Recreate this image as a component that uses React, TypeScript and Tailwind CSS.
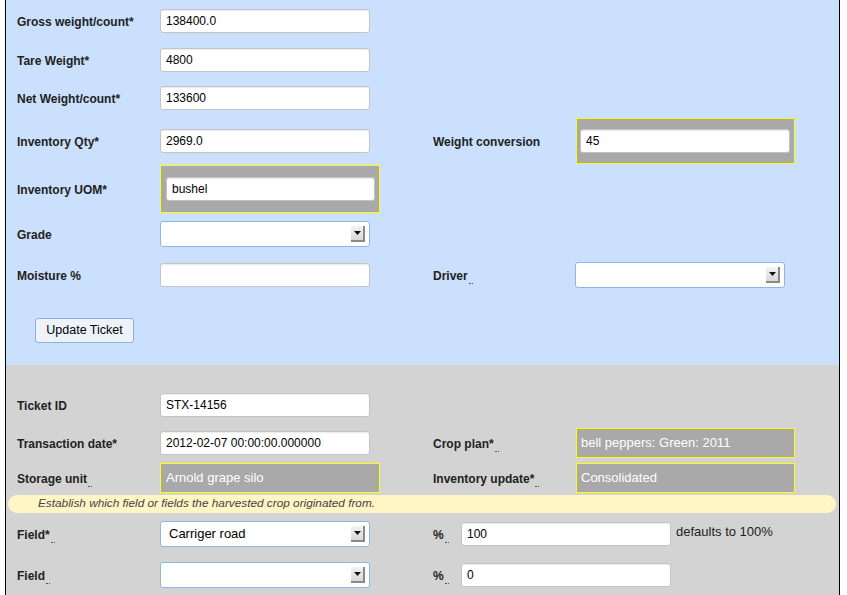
import React from "react";

const font = { fontFamily: '"Liberation Sans", Arial, Helvetica, sans-serif' };

function Dots() {
  return <span className="inline-block w-[4px] h-[1px] border-b border-dotted border-[#555] align-[-4px] ml-[1px]" />;
}

function Label({ text, dots, w = "w-[143px]" }: { text: string; dots?: boolean; w?: string }) {
  return (
    <div className={`${w} shrink-0 mt-[2px] text-[12px] font-bold text-[#222]`}>
      {text}
      {dots && <Dots />}
    </div>
  );
}

function TextInput({ value = "", w = "w-[210px]" }: { value?: string; w?: string }) {
  return (
    <div
      className={`${w} h-[24px] shrink-0 bg-white border border-[#c4c4c4] rounded-[3px] shadow-[inset_0_1px_1px_rgba(0,0,0,0.08)] flex items-center pl-[5px] text-[12px] text-black`}
    >
      {value}
    </div>
  );
}

function Select({ value = "" }: { value?: string }) {
  return (
    <div className="w-[210px] h-[26px] shrink-0 bg-white border border-[#8db5e6] rounded-[3px] flex items-center justify-between pl-[8px] pr-[4px] text-[13px] text-black">
      <span>{value}</span>
      <div className="w-[14px] h-[16px] bg-gradient-to-b from-[#f4f4f4] to-[#d8d8d8] border-r-2 border-b-2 border-r-[#8a8a8a] border-b-[#8a8a8a] flex items-center justify-center">
        <svg width="7" height="4" viewBox="0 0 7 4">
          <path d="M0 0 L7 0 L3.5 4 Z" fill="#111" />
        </svg>
      </div>
    </div>
  );
}

function Boxed({ value, w }: { value: string; w: string }) {
  return (
    <div className={`${w} shrink-0 bg-[#a9a9a9] border border-[#ffff00] py-[11px] pl-[5px]`}>
      <TextInput value={value} w="w-[209px]" />
    </div>
  );
}

function ReadOnly({ value }: { value: string }) {
  return (
    <div className="w-[219px] h-[30px] shrink-0 bg-[#a9a9a9] border border-[#ffff00] flex items-center pl-[4px] text-[13px] text-white">
      {value}
    </div>
  );
}

export default function App() {
  return (
    <div style={font} className="w-[847px] h-[595px] overflow-hidden bg-white">
      <div className="ml-[5px] w-[835px] h-[595px] border-x border-black">
        {/* blue section */}
        <div className="bg-[#cbe0fc] h-[365px] pl-[11px]">
          <div className="flex items-center h-[42px]">
            <Label text="Gross weight/count*" />
            <TextInput value="138400.0" />
          </div>
          <div className="flex items-center h-[35px]">
            <Label text="Tare Weight*" />
            <TextInput value="4800" />
          </div>
          <div className="flex items-center h-[41px]">
            <Label text="Net Weight/count*" />
            <TextInput value="133600" />
          </div>
          <div className="flex items-center h-[45px]">
            <Label text="Inventory Qty*" />
            <div className="w-[273px] shrink-0">
              <TextInput value="2969.0" />
            </div>
            <Label text="Weight conversion" />
            <div className="w-[219px] shrink-0 bg-[#a9a9a9] border border-[#ffff00] py-[10px] pl-[3px]">
              <TextInput value="45" />
            </div>
          </div>
          <div className="flex items-center h-[52px]">
            <Label text="Inventory UOM*" />
            <Boxed value="bushel" w="w-[220px]" />
          </div>
          <div className="flex items-center h-[38px]">
            <Label text="Grade" />
            <Select />
          </div>
          <div className="flex items-center h-[44px]">
            <Label text="Moisture %" />
            <div className="w-[273px] shrink-0">
              <TextInput />
            </div>
            <Label text="Driver" dots w="w-[142px]" />
            <Select />
          </div>
          <div className="pt-[20px] pl-[18px]">
            <button className="w-[99px] h-[25px] bg-[#eef3f9] border border-[#8fb0d8] rounded-[3px] text-[12.5px] text-black">
              Update Ticket
            </button>
          </div>
        </div>

        {/* gray section */}
        <div className="bg-[#d3d3d3] h-[230px] pt-[20px]">
          <div className="pl-[11px]">
            <div className="flex items-center h-[40px]">
              <Label text="Ticket ID" />
              <TextInput value="STX-14156" />
            </div>
            <div className="flex items-center h-[35px]">
              <Label text="Transaction date*" />
              <div className="w-[273px] shrink-0">
                <TextInput value="2012-02-07 00:00:00.000000" />
              </div>
              <Label text="Crop plan*" dots />
              <ReadOnly value="bell peppers: Green: 2011" />
            </div>
            <div className="flex items-center h-[35px]">
              <Label text="Storage unit" dots />
              <div className="w-[273px] shrink-0">
                <div className="w-[220px] h-[30px] bg-[#a9a9a9] border border-[#ffff00] flex items-center pl-[5px] text-[13px] text-white">
                  Arnold grape silo
                </div>
              </div>
              <Label text="Inventory update*" dots />
              <ReadOnly value="Consolidated" />
            </div>
          </div>
          <div className="ml-[2px] mr-[3px] h-[18px] rounded-[9px] bg-[#fff5c5] flex items-center pl-[30px] text-[11.8px] italic text-[#444]">
            Establish which field or fields the harvested crop originated from.
          </div>
          <div className="pl-[11px]">
            <div className="flex items-center h-[42px]">
              <Label text="Field*" dots />
              <div className="w-[273px] shrink-0">
                <Select value="Carriger road" />
              </div>
              <Label text="%" dots w="w-[28px]" />
              <TextInput value="100" />
              <span className="ml-[5px] text-[13px] text-[#222] -mt-[4px]">defaults to 100%</span>
            </div>
            <div className="flex items-center h-[40px]">
              <Label text="Field" dots />
              <div className="w-[273px] shrink-0">
                <Select />
              </div>
              <Label text="%" dots w="w-[28px]" />
              <TextInput value="0" />
            </div>
          </div>
        </div>
      </div>
    </div>
  );
}
